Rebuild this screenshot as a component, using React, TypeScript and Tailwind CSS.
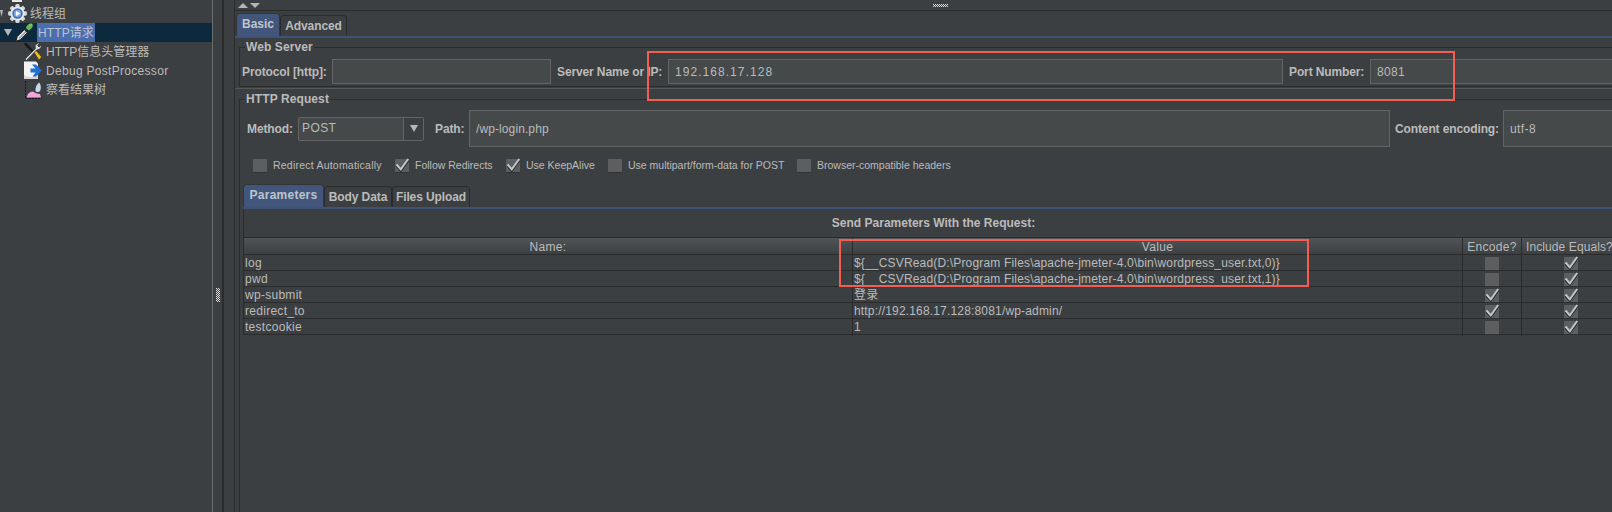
import React from "react";

const FONT = "font-['Liberation_Sans','Noto_Sans_CJK_SC',sans-serif]";

function Tri({ className, dir = "down" }: { className?: string; dir?: "down" | "up" }) {
  return (
    <svg viewBox="0 0 10 6" className={className} preserveAspectRatio="none">
      <polygon points={dir === "down" ? "0,0 10,0 5,6" : "0,6 10,6 5,0"} fill="#b4b7b9" />
    </svg>
  );
}

function Gear() {
  const teeth = [0, 45, 90, 135, 180, 225, 270, 315];
  return (
    <svg width="19" height="19" viewBox="0 0 19 19">
      {teeth.map((a) => (
        <rect key={a} x="7.6" y="0.3" width="3.8" height="18.4" rx="0.8" fill="#d3d6da" transform={`rotate(${a} 9.5 9.5)`} />
      ))}
      <circle cx="9.5" cy="9.5" r="7" fill="#e8eaec" />
      <circle cx="9.5" cy="9.5" r="5.2" fill="#3f6fb8" />
      <circle cx="9.5" cy="9.5" r="3.6" fill="#86aee0" />
      <polygon points="8,7 8,12 12.3,9.5" fill="#ffffff" />
    </svg>
  );
}

function Dropper() {
  return (
    <svg width="19" height="19" viewBox="0 0 19 19">
      <path d="M0.8 18.2 L2.2 13.6 L9.8 6 L13 9.2 L5.4 16.8 Z" fill="#dfe2e5" stroke="#14171a" strokeWidth="1" />
      <path d="M4 15.6 L11.6 8" stroke="#8d9296" strokeWidth="1.2" />
      <path d="M9.8 4.2 L14.8 9.2 L12.8 10.6 L8.4 6.2 Z" fill="#23272b" />
      <path d="M11 5.2 C11.4 2.4 14.4 0.2 16.8 0.6 C18.6 1.6 18.4 5.4 13.8 7.6 Z" fill="#67b552" />
      <path d="M14.2 2.6 C15 1.8 16 1.6 16.8 1.8" stroke="#a6dc93" strokeWidth="0.9" fill="none" />
    </svg>
  );
}

function Tools() {
  return (
    <svg width="19" height="19" viewBox="0 0 19 19">
      <path d="M1.5 1 L3.5 1 L11 9 L9.5 10.5 L1.5 3 Z" fill="#15181a" />
      <path d="M11 10 L13 8.5 L18.5 15 L16 18 Z" fill="#f1c21c" stroke="#3b3316" strokeWidth="0.5" />
      <path d="M2 17 L12.5 6.5 L12 3.5 L15 1 L16.5 1.2 L14.6 3.4 L16 5 L18.3 3 L18.3 5 L16 7.5 L13.5 8 L3.5 18.5 Z" fill="#d8dadc" stroke="#1d1f21" strokeWidth="0.6" />
    </svg>
  );
}

function Doc() {
  return (
    <svg width="19" height="19" viewBox="0 0 19 19">
      <path d="M1 0.5 H13 L15 2.5 V18 H1 Z" fill="#f3f3f1" />
      <path d="M1 14 C6 17 11 17 15 14 V18 H1 Z" fill="#d5d5d3" />
      <path d="M9 3.5 L13 3.5 L18.8 9.5 L13 15.5 L9.5 15.5 L12.5 11.5 L7.5 11.5 L7.5 7.5 L12.5 7.5 Z" fill="#1d70d8" />
    </svg>
  );
}

function Chart() {
  return (
    <svg width="19" height="19" viewBox="0 0 19 19">
      <path d="M2.5 1 V18.5 H19" stroke="#16181a" strokeWidth="1" fill="none" strokeDasharray="2 1" />
      <path d="M3.5 17.5 L5 14 C7 12 9 10.5 11 12 C13 14 15 13.5 17 14 L18 17.5 Z" fill="#f0a6dc" />
      <path d="M12.5 11 C12 7.5 14 4 16 2.5 C18 4 18.3 8.5 17 11 C16 12.5 13.5 12.5 12.5 11 Z" fill="#c9d7ee" />
    </svg>
  );
}

function Check({ on = false }: { on?: boolean }) {
  return (
    <div className="relative h-[14px] w-[14px] shrink-0 rounded-[1px] border-b border-b-[#2f3132] bg-[#5c5e60]">
      {on && (
        <svg width="15" height="14" viewBox="0 0 15 14" className="absolute top-[-1px] left-0">
          <path d="M1.5 6.5 L5.8 11.3 L13.2 1" fill="none" stroke="#242628" strokeWidth="2.4" transform="translate(0 1.2)" />
          <path d="M1.5 6.5 L5.8 11.3 L13.2 1" fill="none" stroke="#c4c6c8" strokeWidth="2" />
        </svg>
      )}
    </div>
  );
}

function Grip({ w, h }: { w: number; h: number }) {
  const rects: React.ReactNode[] = [];
  for (let y = 0; y < h; y++)
    for (let x = 0; x < w; x++)
      if ((x + y) % 2 === 0) rects.push(<rect key={`${x}-${y}`} x={x} y={y} width="1" height="1" fill="#e2e2e2" />);
  return (
    <svg width={w} height={h} viewBox={`0 0 ${w} ${h}`}>
      {rects}
    </svg>
  );
}

function Tab({ label, active, className }: { label: string; active?: boolean; className: string }) {
  return (
    <div
      className={`flex items-center justify-center rounded-t-[4px] border border-b-0 text-[12px] font-bold ${
        active ? "border-[#333537] bg-[#42557b] text-[#bfc5cc]" : "border-[#2b2b2b] bg-[#3c3f41] tracking-[-0.1px] text-[#bbbbbb]"
      } ${className}`}
    >
      {label}
    </div>
  );
}

function Field({ w, h, text, track = "tracking-[0.35px]" }: { w: string; h: string; text?: string; track?: string }) {
  return (
    <div className={`flex shrink-0 items-center border border-[#646464] bg-[#45494a] pl-[6px] text-[12px] text-[#bbbbbb] ${track} ${w} ${h}`}>
      {text}
    </div>
  );
}

function Legend({ children }: { children: React.ReactNode }) {
  return <legend className="ml-[5px] px-[1px] text-[12px] leading-[14px] font-bold tracking-[0.1px] text-[#bbbbbb]">{children}</legend>;
}

function Label({ children, className }: { children: React.ReactNode; className: string }) {
  return <div className={`shrink-0 text-[12px] font-bold tracking-[-0.12px] whitespace-nowrap text-[#bbbbbb] ${className}`}>{children}</div>;
}

function Opt({ label, on, className, track = "tracking-[0px]" }: { label: string; on?: boolean; className: string; track?: string }) {
  return (
    <div className={`flex shrink-0 items-center ${className}`}>
      <Check on={on} />
      <span className={`ml-[6px] text-[10.5px] whitespace-nowrap text-[#bbbbbb] ${track}`}>{label}</span>
    </div>
  );
}

const rows: [string, string, boolean, boolean][] = [
  ["log", "${__CSVRead(D:\\Program Files\\apache-jmeter-4.0\\bin\\wordpress_user.txt,0)}", false, true],
  ["pwd", "${__CSVRead(D:\\Program Files\\apache-jmeter-4.0\\bin\\wordpress_user.txt,1)}", false, true],
  ["wp-submit", "登录", true, true],
  ["redirect_to", "http://192.168.17.128:8081/wp-admin/", true, true],
  ["testcookie", "1", false, true],
];

const COLS = "grid grid-cols-[608px_610px_59px_99px]";

function TreeRow({ icon, text, pl, selected, arrow, textClass }: { icon: React.ReactNode; text: string; pl: string; selected?: boolean; arrow?: React.ReactNode; textClass: string }) {
  return (
    <div className={`flex h-[19px] items-center ${pl} ${selected ? "bg-[#0d293e]" : ""}`}>
      {arrow}
      {icon}
      <span className={`flex h-[19px] items-center text-[12px] whitespace-nowrap ${textClass} ${selected ? "bg-[#4b6eaf] px-[1px] text-[#bbc4d0]" : "text-[#bbbbbb]"}`}>
        {text}
      </span>
    </div>
  );
}

export default function App() {
  return (
    <div className={`relative flex h-[512px] w-[1612px] overflow-hidden bg-[#3c3f41] ${FONT}`}>
      {/* Tree */}
      <div className="w-[212px] shrink-0">
        <div className="ml-[12px] h-[2px] w-[10px] bg-[#e8e8e8]" />
        <div className="h-[2px]" />
        <TreeRow pl="pl-0" arrow={<Tri className="mr-[5px] h-[7px] w-[3px]" />} icon={<Gear />} text="线程组" textClass="ml-[3px]" />
        <TreeRow pl="pl-[4px]" selected arrow={<Tri className="mr-[3px] h-[7px] w-[8px]" />} icon={<Dropper />} text="HTTP请求" textClass="ml-[3px] tracking-[0.1px]" />
        <TreeRow pl="pl-[23px]" icon={<Tools />} text="HTTP信息头管理器" textClass="ml-[4px]" />
        <TreeRow pl="pl-[23px]" icon={<Doc />} text="Debug PostProcessor" textClass="ml-[4px] tracking-[0.3px]" />
        <TreeRow pl="pl-[23px]" icon={<Chart />} text="察看结果树" textClass="ml-[4px]" />
      </div>
      <div className="w-px shrink-0 bg-[#6a6d6f]" />
      {/* vertical splitter */}
      <div className="flex w-[9px] shrink-0 justify-center pt-[288px]">
        <div className="h-[14px]">
          <Grip w={4} h={14} />
        </div>
      </div>
      <div className="w-[2px] shrink-0 bg-[#2b2b2b]" />
      <div className="w-[10px] shrink-0" />
      <div className="w-px shrink-0 bg-[#2b2b2b]" />

      {/* Right */}
      <div className="flex min-w-0 flex-1 flex-col overflow-hidden">
        <div className="flex h-[11px] shrink-0 items-start border-b border-b-[#2b2b2b] bg-[#3c3f41] pt-[3px]">
          <Tri dir="up" className="ml-[3px] h-[5px] w-[10px]" />
          <Tri className="ml-[2px] h-[5px] w-[10px]" />
          <div className="ml-[673px] pt-[1px]">
            <Grip w={15} h={3} />
          </div>
        </div>
        {/* tabs */}
        <div className="flex h-[25px] shrink-0 items-end pl-px">
          <Tab label="Basic" active className="h-[23px] w-[44px] pb-[3px]" />
          <Tab label="Advanced" className="h-[21px] w-[67px]" />
        </div>
        <div className="h-[2px] w-full shrink-0 bg-[#3f5278]" />

        {/* Web Server */}
        <fieldset className="mt-[2px] ml-[4px] h-[47px] w-[1450px] shrink-0 border border-[#2b2b2b]">
          <Legend>Web Server</Legend>
          <div className="flex items-center pt-[5px] pl-[2px]">
            <Label className="w-[90px]">Protocol [http]:</Label>
            <Field w="w-[219px]" h="h-[25px]" />
            <Label className="ml-[6px] w-[111px]">Server Name or IP:</Label>
            <Field w="w-[615px]" h="h-[25px]" text="192.168.17.128" track="tracking-[1.05px]" />
            <Label className="ml-[6px] w-[81px]">Port Number:</Label>
            <Field w="w-[300px]" h="h-[25px]" text="8081" />
          </div>
        </fieldset>
        <div className="mt-[1px] h-px w-full shrink-0 bg-[#55585a]" />

        {/* HTTP Request */}
        <fieldset className="mt-[3px] ml-[4px] w-[1450px] flex-1 border border-b-0 border-[#2b2b2b]">
          <Legend>HTTP Request</Legend>
          <div className="flex items-center pt-[4px] pl-[7px]">
            <Label className="w-[51px]">Method:</Label>
            <div className="flex h-[24px] w-[126px] shrink-0 items-center rounded-[2px] border border-[#646464] bg-[#45494a]">
              <span className="flex-1 pb-[2px] pl-[3px] text-[12px] tracking-[0.4px] text-[#bbbbbb]">POST</span>
              <div className="flex h-full w-[20px] items-center justify-center border-l border-l-[#646464] bg-[#3c3f41]">
                <Tri className="h-[7px] w-[8px]" />
              </div>
            </div>
            <Label className="ml-[11px] w-[34px]">Path:</Label>
            <Field w="w-[921px]" h="h-[37px]" text="/wp-login.php" track="tracking-[0.1px]" />
            <Label className="ml-[5px] w-[108px]">Content encoding:</Label>
            <Field w="w-[200px]" h="h-[37px]" text="utf-8" track="tracking-[0.4px]" />
          </div>
          <div className="mt-[12px] flex h-[14px] items-center pl-[13px]">
            <Opt label="Redirect Automatically" track="tracking-[0.22px]" className="w-[142px]" />
            <Opt label="Follow Redirects" on className="w-[111px]" />
            <Opt label="Use KeepAlive" on className="w-[102px]" />
            <Opt label="Use multipart/form-data for POST" className="w-[189px]" />
            <Opt label="Browser-compatible headers" className="w-[200px]" />
          </div>

          {/* sub tabs */}
          <div className="mt-[11px] flex h-[23px] items-end pl-[3px]">
            <Tab label="Parameters" active className="h-[23px] w-[81px] pb-[3px] tracking-[0.25px]" />
            <Tab label="Body Data" className="h-[21px] w-[68px]" />
            <Tab label="Files Upload" className="h-[21px] w-[78px]" />
          </div>
          <div className="ml-[3px] h-[2px] bg-[#3f5278]" />
          <div className="ml-[3px] border-l border-l-[#2b2b2b]">
            <div className="flex h-[28px] w-[1377px] items-center justify-center pl-[2px] text-[12px] font-bold text-[#bbbbbb]">
              Send Parameters With the Request:
            </div>
            <div className={`${COLS} h-[18px] border-t border-b border-[#2b2b2b] bg-gradient-to-b from-[#515456] to-[#3d4042] text-[12px] tracking-[0.3px] text-[#bbbbbb]`}>
              <div className="text-center">Name:</div>
              <div className="border-l border-l-[#2b2b2b] text-center">Value</div>
              <div className="border-l border-l-[#2b2b2b] text-center">Encode?</div>
              <div className="border-l border-l-[#2b2b2b] pl-[4px] tracking-[0.1px] whitespace-nowrap">Include Equals?</div>
            </div>
            {rows.map(([name, value, enc, inc]) => (
              <div key={name} className={`${COLS} h-[16px] border-b border-b-[#2b2b2b] text-[12px] leading-[17px] tracking-[0.17px] text-[#bbbbbb]`}>
                <div className="pl-[1px] tracking-[0.28px]">{name}</div>
                <div className="border-l border-l-[#2b2b2b] pl-[1px] whitespace-nowrap">{value}</div>
                <div className="flex items-center justify-center border-l border-l-[#2b2b2b]">
                  <Check on={enc} />
                </div>
                <div className="flex items-center justify-center border-l border-l-[#2b2b2b]">
                  <Check on={inc} />
                </div>
              </div>
            ))}
          </div>
        </fieldset>
      </div>

      {/* annotation boxes */}
      <div className="absolute top-[51px] left-[647px] h-[50px] w-[808px] border-2 border-[#f45d50]" />
      <div className="absolute top-[239px] left-[839px] h-[48px] w-[470px] border-2 border-[#f45d50]" />
    </div>
  );
}
